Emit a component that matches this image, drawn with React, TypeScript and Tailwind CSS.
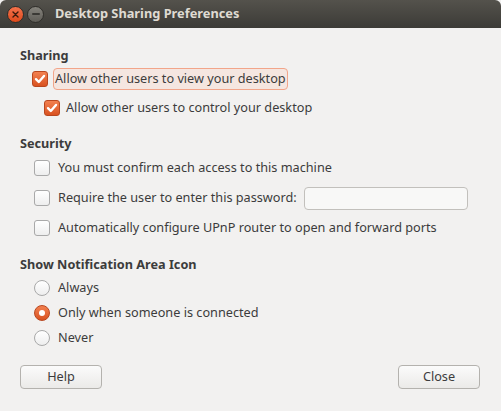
import React, { useState } from 'react';

const font = { fontFamily: '"Noto Sans", "Open Sans", sans-serif' };

const Check = ({ checked }: { checked: boolean }) =>
  checked ? (
    <span className="flex h-[16px] w-[16px] shrink-0 items-center justify-center rounded-[3px] border border-[#b9471f] bg-gradient-to-b from-[#f2804f] to-[#d9521f]">
      <svg width="12" height="12" viewBox="0 0 12 12">
        <path d="M2 6.2 L4.8 9 L10 3" fill="none" stroke="#fff" strokeWidth="2.4" strokeLinecap="round" strokeLinejoin="round" />
      </svg>
    </span>
  ) : (
    <span className="block h-[16px] w-[16px] shrink-0 rounded-[3px] border border-[#a9a9a9] bg-gradient-to-b from-[#ffffff] to-[#eeeeee]" />
  );

const Radio = ({ on }: { on: boolean }) =>
  on ? (
    <span className="flex h-[16px] w-[16px] shrink-0 items-center justify-center rounded-full border border-[#b9471f] bg-gradient-to-b from-[#f2804f] to-[#d9521f]">
      <span className="block h-[6px] w-[6px] rounded-full bg-white" />
    </span>
  ) : (
    <span className="block h-[16px] w-[16px] shrink-0 rounded-full border border-[#a9a9a9] bg-gradient-to-b from-[#ffffff] to-[#eeeeee]" />
  );

const App = () => {
  const [mode, setMode] = useState(1);

  return (
    <div className="h-[411px] w-[501px] overflow-hidden whitespace-nowrap bg-[#f2f1f0] text-[12.7px] text-[#3c3c3c]" style={font}>
      <div className="flex h-[28px] items-center rounded-t-[6px] bg-gradient-to-b from-[#54524c] to-[#3c3b37] pl-[7px]">
        <span className="flex h-[17px] w-[17px] items-center justify-center rounded-full border border-[#2f2e2a] bg-gradient-to-b from-[#f4714a] to-[#df4a19]">
          <svg width="7" height="7" viewBox="0 0 7 7">
            <path d="M1 1 L6 6 M6 1 L1 6" stroke="#3a1a0c" strokeWidth="1.4" strokeLinecap="round" />
          </svg>
        </span>
        <span className="ml-[3px] flex h-[17px] w-[17px] items-center justify-center rounded-full border border-[#2f2e2a] bg-gradient-to-b from-[#85837c] to-[#5f5d57]">
          <span className="block h-[2px] w-[8px] rounded bg-[#3a3935]" />
        </span>
        <span className="ml-[11px] text-[12.8px] font-bold text-[#dfdbd2]">Desktop Sharing Preferences</span>
      </div>

      <div className="flex flex-col px-[20px] pt-[18px]">
        <div className="flex h-[20px] items-center font-bold">Sharing</div>

        <div className="mt-[1px] flex h-[24px] items-center pl-[12px]">
          <Check checked />
          <span className="ml-[5px] flex h-[22px] items-center rounded-[4px] border border-[#f2a58a] bg-[#f5e6e0] px-[1px]">
            Allow other users to view your desktop
          </span>
        </div>
        <div className="mt-[5px] flex h-[24px] items-center pl-[24px]">
          <Check checked />
          <span className="ml-[6px]">Allow other users to control your desktop</span>
        </div>

        <div className="mt-[14px] flex h-[20px] items-center font-bold">Security</div>
        <div className="mt-[2px] flex h-[24px] items-center pl-[14px]">
          <Check checked={false} />
          <span className="ml-[8px]">You must confirm each access to this machine</span>
        </div>
        <div className="mt-[6px] flex h-[24px] items-center pl-[14px]">
          <Check checked={false} />
          <span className="ml-[8px]">Require the user to enter this password:</span>
          <input
            type="password"
            className="ml-auto mr-[13px] h-[23px] w-[164px] shrink-0 rounded-[4px] border border-[#c2c0bc] bg-[#f8f8f7] outline-none"
          />
        </div>
        <div className="mt-[6px] flex h-[24px] items-center pl-[14px]">
          <Check checked={false} />
          <span className="ml-[8px]">Automatically configure UPnP router to open and forward ports</span>
        </div>

        <div className="mt-[15px] flex h-[20px] items-center font-bold">Show Notification Area Icon</div>
        {['Always', 'Only when someone is connected', 'Never'].map((label, i) => (
          <div
            key={label}
            onClick={() => setMode(i)}
            className="mt-[1px] flex h-[24px] cursor-default items-center pl-[14px]"
          >
            <Radio on={mode === i} />
            <span className="ml-[8px]">{label}</span>
          </div>
        ))}

        <div className="mt-[15px] flex items-center justify-between">
          <button className="h-[24px] w-[82px] rounded-[4px] border border-[#b4b2ae] bg-gradient-to-b from-[#fbfbfb] to-[#ebeae8]">
            Help
          </button>
          <button className="mr-[1px] h-[24px] w-[82px] rounded-[4px] border border-[#b4b2ae] bg-gradient-to-b from-[#fbfbfb] to-[#ebeae8]">
            Close
          </button>
        </div>
      </div>
    </div>
  );
};

export default App;
